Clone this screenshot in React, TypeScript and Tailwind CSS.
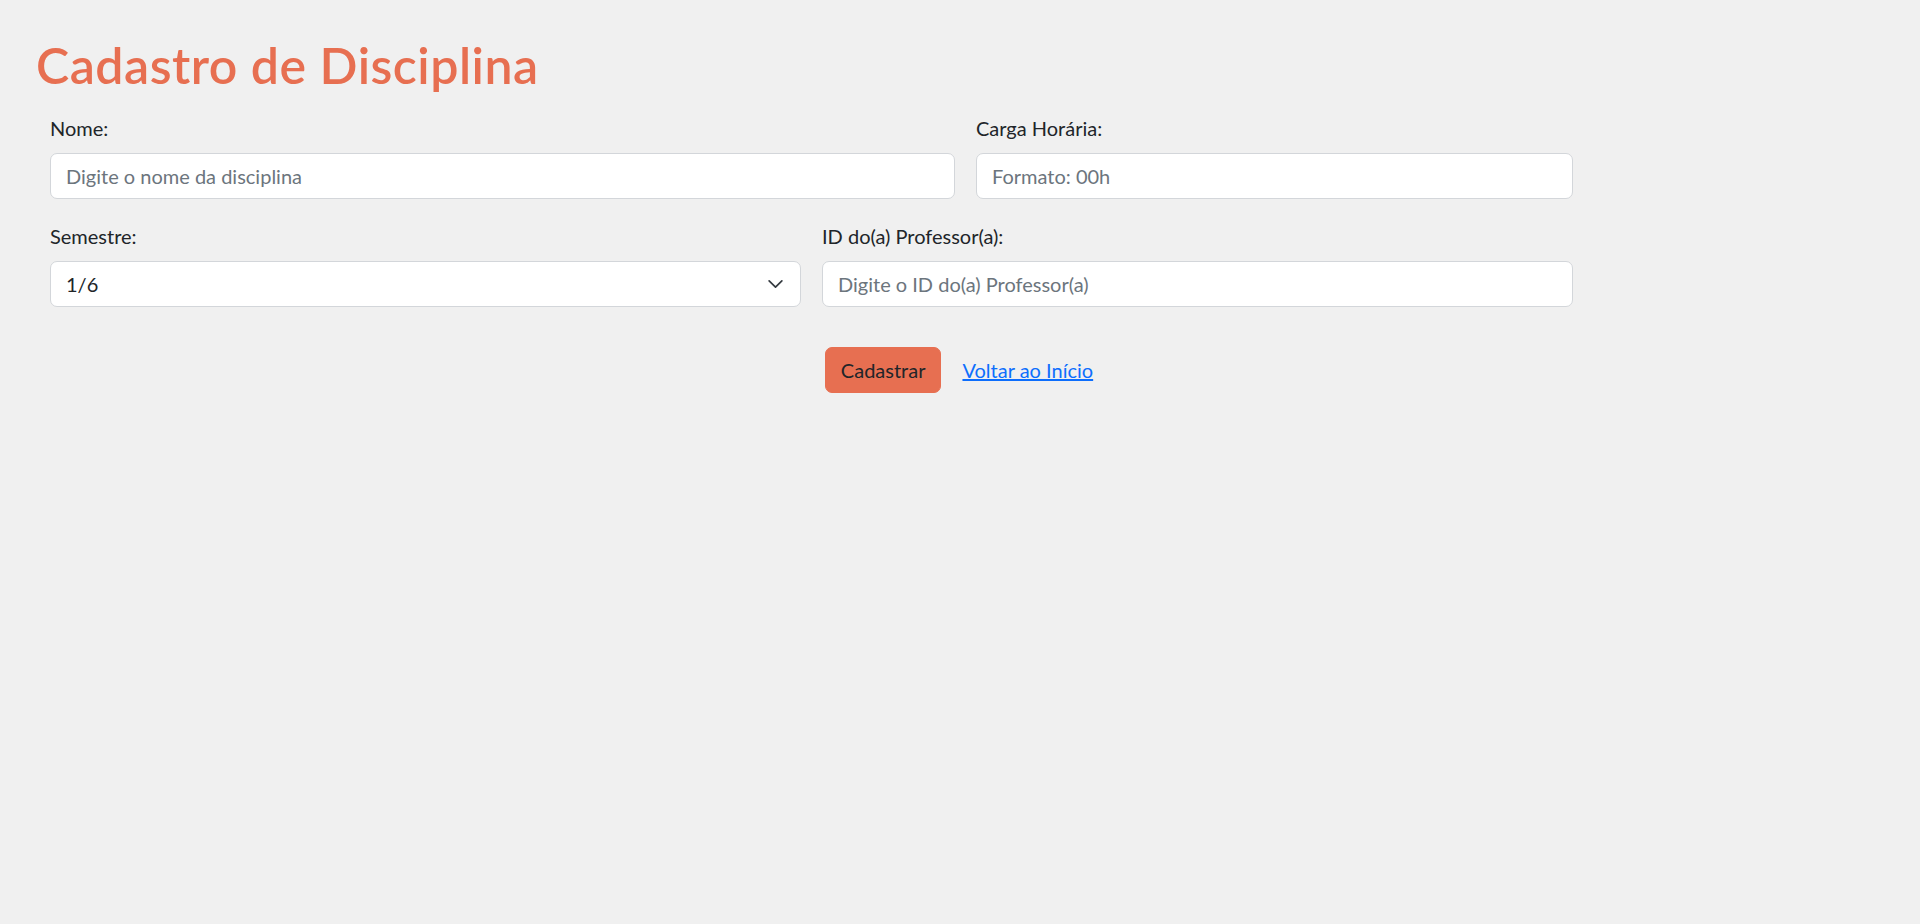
import { useState } from 'react';

const inputCls =
  'w-full h-[46px] px-[15px] rounded-[7px] border border-[#d3d6da] bg-white text-[20px] text-[#212529] placeholder:text-[#6c757d] outline-none focus:border-[#f1a58f]';

function Field({ label, children }: { label: string; children: React.ReactNode }) {
  return (
    <div className="flex flex-col">
      <label className="text-[20px] leading-[30px] text-[#212529] mb-[10px]">{label}</label>
      {children}
    </div>
  );
}

export default function App() {
  const [nome, setNome] = useState('');
  const [carga, setCarga] = useState('');
  const [semestre, setSemestre] = useState('1/6');
  const [professor, setProfessor] = useState('');

  return (
    <div className="min-h-screen bg-[#f0f0f0] pt-[35px] pl-[36px]" style={{ fontFamily: 'Lato, "Noto Sans", sans-serif' }}>
      <h1 className="text-[50px] leading-[60px] font-semibold tracking-[0.5px] text-[#e76f51] mb-[18px]">Cadastro de Disciplina</h1>

      <form onSubmit={(e) => e.preventDefault()} className="ml-[14px] w-[1523px]">
        <div className="grid grid-cols-[905px_597px] gap-[21px]">
          <Field label="Nome:">
            <input value={nome} onChange={(e) => setNome(e.target.value)} placeholder="Digite o nome da disciplina" className={inputCls} />
          </Field>
          <Field label="Carga Horária:">
            <input value={carga} onChange={(e) => setCarga(e.target.value)} placeholder="Formato: 00h" className={inputCls} />
          </Field>
        </div>

        <div className="grid grid-cols-2 gap-[21px] mt-[22px]">
          <Field label="Semestre:">
            <div className="relative">
              <select
                value={semestre}
                onChange={(e) => setSemestre(e.target.value)}
                className={inputCls + ' appearance-none pr-[50px]'}
              >
                {['1/6', '2/6', '3/6', '4/6', '5/6', '6/6'].map((s) => (
                  <option key={s} value={s}>
                    {s}
                  </option>
                ))}
              </select>
              <svg viewBox="0 0 16 16" className="absolute right-[17px] top-1/2 -translate-y-1/2 w-[17px] h-[17px] pointer-events-none">
                <path fill="none" stroke="#343a40" strokeLinecap="round" strokeLinejoin="round" strokeWidth="1.6" d="m2 5 6 6 6-6" />
              </svg>
            </div>
          </Field>
          <Field label="ID do(a) Professor(a):">
            <input value={professor} onChange={(e) => setProfessor(e.target.value)} placeholder="Digite o ID do(a) Professor(a)" className={inputCls} />
          </Field>
        </div>
      </form>

      <div className="flex items-center justify-center gap-[21px] mt-[40px] pr-[38px]">
        <button type="submit" className="h-[46px] px-[15px] rounded-[7px] bg-[#e76f51] text-[20px] text-[#212529] border border-[#e76f51]">
          Cadastrar
        </button>
        <a href="#" className="text-[20px] text-[#0d6efd] underline">
          Voltar ao Início
        </a>
      </div>
    </div>
  );
}
